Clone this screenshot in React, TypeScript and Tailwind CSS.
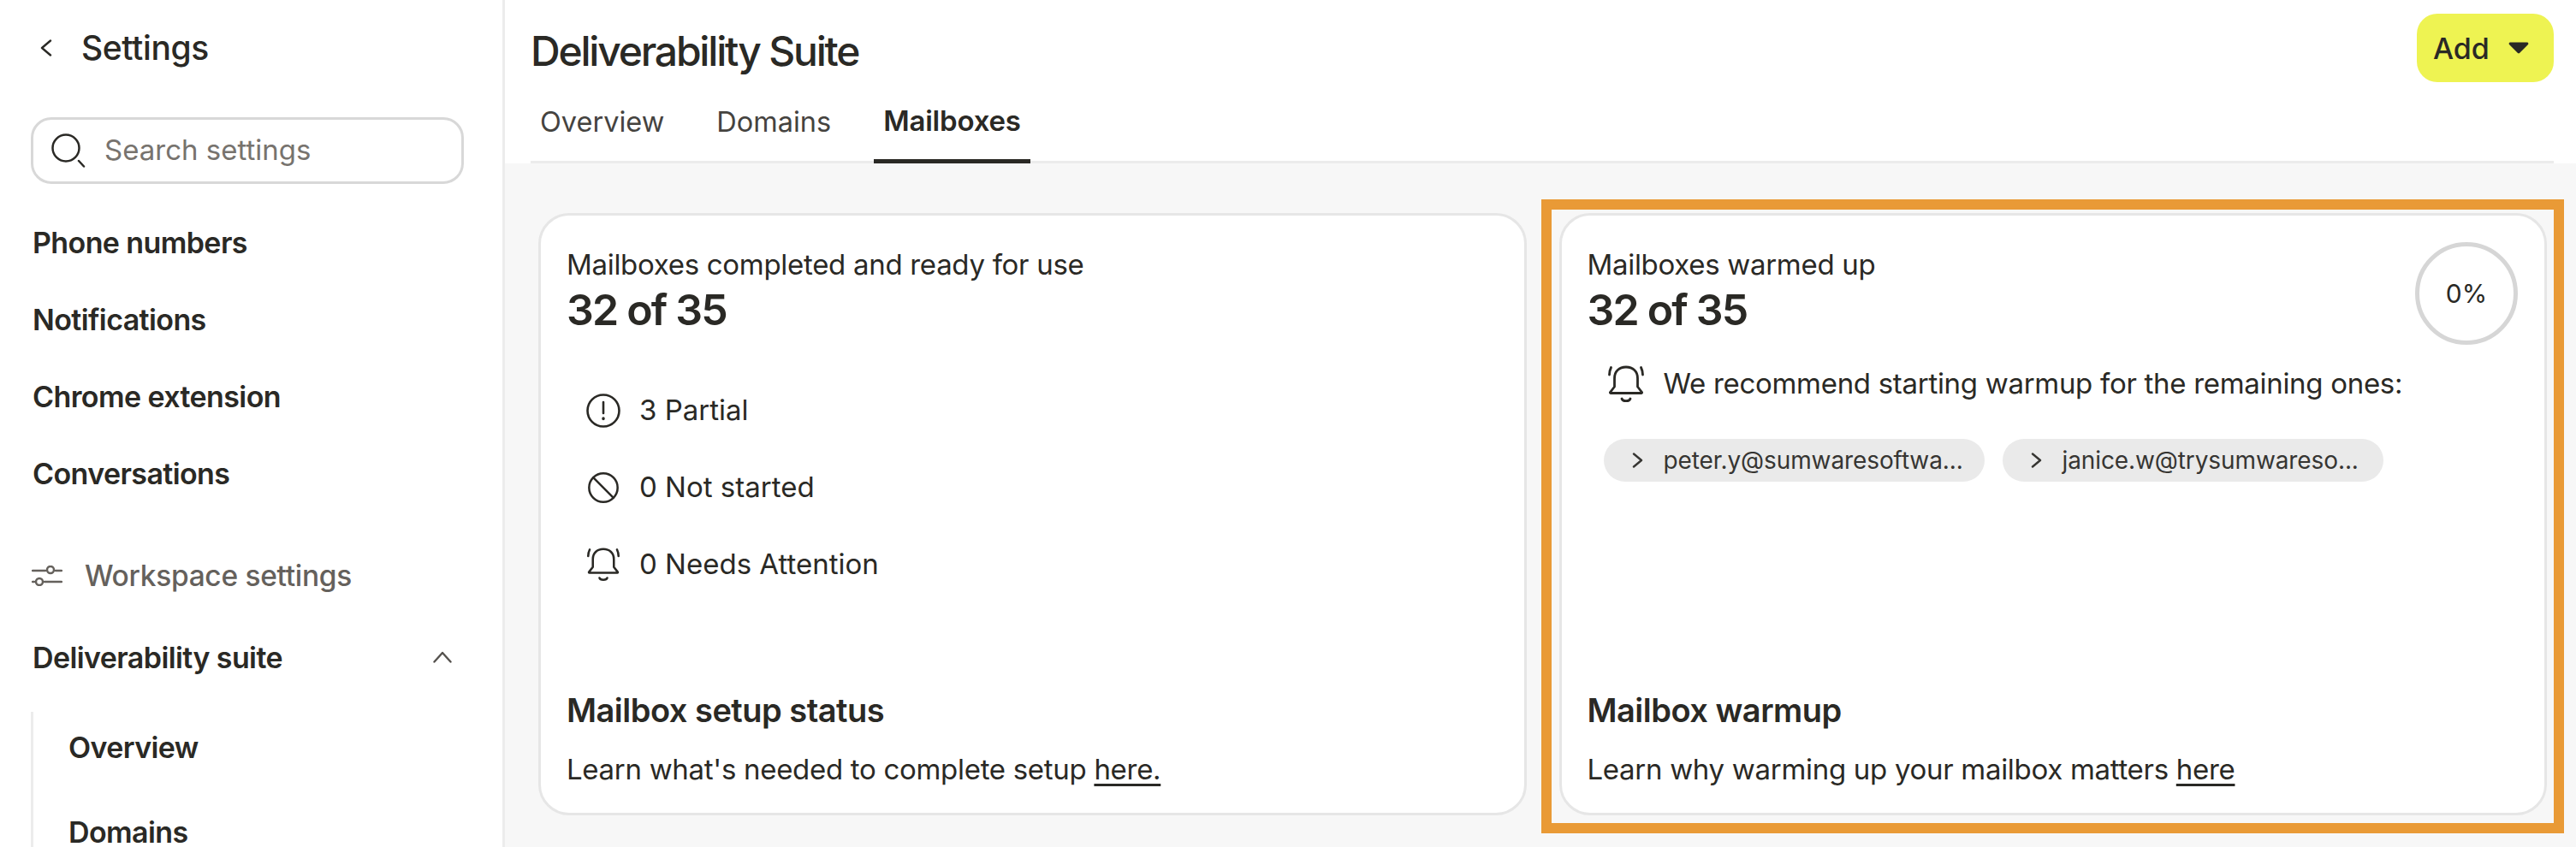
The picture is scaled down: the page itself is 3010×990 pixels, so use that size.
import type { ReactNode } from 'react';
import { Ban } from 'lucide-react';

const NAV_ITEMS = ['Phone numbers', 'Notifications', 'Chrome extension', 'Conversations'];

function SearchIcon() {
  return (
    <svg width="40" height="40" viewBox="0 0 40 40" fill="none" stroke="#2a2925" strokeWidth="2.5" strokeLinecap="round">
      <circle cx="17" cy="17" r="15.5" />
      <path d="M32 32l6 6.500" />
    </svg>
  );
}

function SlidersIcon() {
  return (
    <svg width="36" height="24" viewBox="0 0 36 24" fill="none" stroke="#65615c" strokeWidth="2.500" strokeLinecap="round">
      <path d="M1 6h15M28 6h7M1 19h2M15 19h20" />
      <circle cx="22" cy="5" r="4" />
      <circle cx="9" cy="19" r="4" />
    </svg>
  );
}

function AlertIcon() {
  return (
    <svg width="40" height="40" viewBox="0 0 40 40" fill="none" stroke="#2a2925" strokeWidth="2.600" strokeLinecap="round">
      <circle cx="20" cy="20" r="18.500" />
      <path d="M20 10v13" />
      <path d="M20 29v0.500" strokeWidth="3.400" />
    </svg>
  );
}

function BellIcon({ size }: { size: number }) {
  return (
    <svg width={size} height={size} viewBox="0 0 42 44" fill="none" stroke="#2a2925" strokeWidth="2.8" strokeLinecap="round" strokeLinejoin="round">
      <path d="M7.500 25V15C7.500 7 13 2 21 2s13.500 5 13.500 13v10l5 6.500a0.600 0.600 0 0 1-0.500 1H3a0.600 0.600 0 0 1-0.500-1z" />
      <path d="M16 39c1 3.500 9 3.500 10 0" />
      <path d="M3.500 2.500C2 5.500 1.500 8 1.500 11M38.500 2.500c1.500 3 2 5.500 2 8.500" />
    </svg>
  );
}

function BackChevron() {
  return (
    <svg width="14" height="20" viewBox="0 0 14 20" fill="none" stroke="#2a2925" strokeWidth="2.400" strokeLinecap="round" strokeLinejoin="round">
      <path d="M12 1.500L2 10l10 8.500" />
    </svg>
  );
}

function ChipChevron() {
  return (
    <svg width="13" height="18" viewBox="0 0 13 18" fill="none" stroke="#363532" strokeWidth="2.400" strokeLinecap="round" strokeLinejoin="round">
      <path d="M2 1.500L11 9l-9 7.500" />
    </svg>
  );
}

function Card({ children, highlighted }: { children: ReactNode; highlighted?: boolean }) {
  return (
    <div className="relative flex h-[704px] flex-1 flex-col rounded-[36px] border-[3px] border-[#e6e6e6] bg-white pb-[31px] pl-[30px] pr-[31px] pt-[38px]">
      {children}
      {highlighted && (
        <div className="pointer-events-none absolute -bottom-[24px] -left-[24px] -right-[23px] -top-[19px] border-[12px] border-[#e99a36]" />
      )}
    </div>
  );
}

function CardHeading({ label }: { label: string }) {
  return (
    <div>
      <div className="h-[40px] text-[33px] leading-[39px] tracking-[-0.3px]">{label}</div>
      <div className="mt-[4px] h-[56px] text-[50px] font-semibold leading-[56px] tracking-[-1.8px]">32 of 35</div>
    </div>
  );
}

function CardFooter({ title, text, link }: { title: string; text: string; link: string }) {
  return (
    <div className="mt-auto">
      <div className="h-[44px] text-[38px] font-semibold leading-[44px] tracking-[-0.5px]">{title}</div>
      <div className="mt-[27px] h-[40px] text-[33px] leading-[40px] tracking-[-0.3px]">
        {text} <span className="underline underline-offset-[5px]">{link}</span>
      </div>
    </div>
  );
}

function StatusRow({ icon, label }: { icon: ReactNode; label: string }) {
  return (
    <div className="flex h-[90px] items-center gap-[22px] pl-[23px] text-[33px]">
      <span className="flex w-[40px] justify-center">{icon}</span>
      {label}
    </div>
  );
}

function MailboxChip({ email }: { email: string }) {
  return (
    <div className="flex h-[50px] w-[445px] items-center gap-[24px] rounded-full bg-[#eaeaea] pl-[33px] text-[28px] tracking-[-0.1px] text-[#363532]">
      <ChipChevron />
      {email}
    </div>
  );
}

export default function App() {
  return (
    <div className="flex h-[990px] w-[3010px] overflow-hidden bg-white font-['Inter',sans-serif] text-[#2a2925]">
      {/* Sidebar */}
      <aside className="flex w-[590px] shrink-0 flex-col border-r-[3px] border-[#ececec]">
        <div className="flex h-[112px] shrink-0 items-center pl-[47px]">
          <BackChevron />
          <span className="ml-[34px] text-[39px] font-medium tracking-[-0.4px]">Settings</span>
        </div>
        <div className="ml-[36px] mt-[25px] flex h-[78px] w-[506px] shrink-0 items-center gap-[22px] rounded-[24px] border-[3px] border-[#d8d8d8] pl-[21px] text-[33px] text-[#77736e]">
          <SearchIcon />
          Search settings
        </div>
        <nav className="mt-[23px] shrink-0">
          {NAV_ITEMS.map((item) => (
            <div key={item} className="flex h-[90px] items-center pl-[38px] text-[34px] font-semibold tracking-[-0.6px]">
              {item}
            </div>
          ))}
        </nav>
        <div className="mt-[30px] flex h-[90px] shrink-0 items-center gap-[26px] pl-[37px] text-[33.500px] font-medium tracking-[-0.3px] text-[#65615c]">
          <SlidersIcon />
          Workspace settings
        </div>
        <div className="mt-[5px] flex h-[90px] shrink-0 items-center justify-between pl-[38px] pr-[59px] text-[34px] font-semibold tracking-[-0.6px]">
          Deliverability suite
          <svg width="22" height="14" viewBox="0 0 22 14" fill="none" stroke="#55524e" strokeWidth="2.400" strokeLinecap="round" strokeLinejoin="round">
            <path d="M1.500 12.500L11 2l9.500 10.500" />
          </svg>
        </div>
        <div className="ml-[36px] mt-[19px] shrink-0 border-l-[3px] border-[#ececec] pl-[41px] text-[34px] font-semibold tracking-[-0.6px]">
          <div className="flex h-[82px] items-center">Overview</div>
          <div className="mt-[42px] h-[34px] leading-[34px]">Domains</div>
        </div>
      </aside>

      {/* Main */}
      <main className="flex min-w-0 flex-1 flex-col">
        <header className="h-[191px] bg-white pl-[30px] pr-[26px]">
          <div className="h-[191px] border-b-[3px] border-[#ececec]">
            <div className="flex h-[96px] items-start justify-between">
              <h1 className="h-[88px] pt-[16px] text-[48px] font-medium leading-[88px] tracking-[-2.2px]">Deliverability Suite</h1>
              <button className="mt-[16px] flex h-[80px] w-[160px] items-center gap-[22px] rounded-[24px] bg-[#eef352] pl-[19px] text-[34px] font-medium">
                Add
                <svg width="24" height="14" viewBox="0 0 24 14" fill="#2a2925">
                  <path d="M2 0.500h20a1.500 1.500 0 0 1 1 2.500L13 13a1.500 1.500 0 0 1-2 0L1 3a1.500 1.500 0 0 1 1-2.500z" />
                </svg>
              </button>
            </div>
            <div className="flex h-[95px] gap-[39px] text-[32.500px]">
              <div className="flex h-[92px] items-center px-[11px] pt-[2px] text-[#45433f]">Overview</div>
              <div className="flex h-[92px] items-center px-[11px] pt-[2px] text-[#45433f]">Domains</div>
              <div className="flex h-[95px] items-center border-b-[5px] border-[#2a2925] px-[11px] pt-[2px] text-[33px] font-semibold tracking-[-0.2px]">
                Mailboxes
              </div>
            </div>
          </div>
        </header>

        <section className="flex flex-1 gap-[38px] bg-[#f7f7f7] pl-[39px] pr-[34px] pt-[58px]">
          <Card>
            <CardHeading label="Mailboxes completed and ready for use" />
            <div className="mt-[45px]">
              <StatusRow icon={<AlertIcon />} label="3 Partial" />
              <StatusRow icon={<Ban size={46} strokeWidth={1.5} />} label="0 Not started" />
              <StatusRow icon={<BellIcon size={40} />} label="0 Needs Attention" />
            </div>
            <CardFooter title="Mailbox setup status" text="Learn what's needed to complete setup" link="here." />
          </Card>

          <Card highlighted>
            <div className="flex items-start justify-between">
              <CardHeading label="Mailboxes warmed up" />
              <div className="-mb-[13px] -mt-[7px] flex h-[120px] w-[120px] items-center justify-center rounded-full border-[5px] border-[#d6d6d6] text-[30px]">
                0%
              </div>
            </div>
            <div className="ml-[23px] mt-[37px] flex h-[44px] items-center gap-[22px] text-[33px] tracking-[-0.3px]">
              <BellIcon size={44} />
              We recommend starting warmup for the remaining ones:
            </div>
            <div className="ml-[19px] mt-[42px] flex gap-[21px]">
              <MailboxChip email="peter.y@sumwaresoftwa..." />
              <MailboxChip email="janice.w@trysumwareso..." />
            </div>
            <CardFooter title="Mailbox warmup" text="Learn why warming up your mailbox matters" link="here" />
          </Card>
        </section>
      </main>
    </div>
  );
}
